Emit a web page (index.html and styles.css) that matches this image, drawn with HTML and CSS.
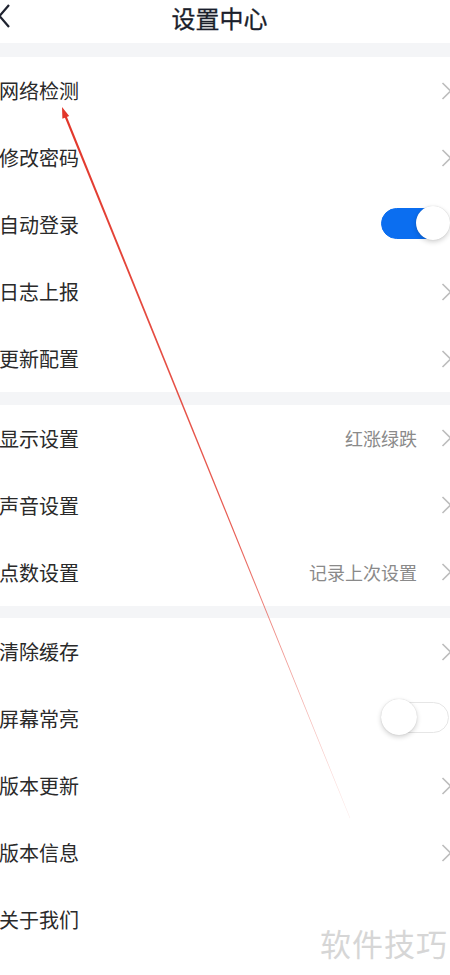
FILE: index.html
```html
<!DOCTYPE html>
<html lang="zh-CN">

<head>
  <meta charset="UTF-8" />
  <meta name="viewport" content="width=device-width, initial-scale=1.0" />
  <title>设置中心</title>
  <link rel="stylesheet" href="styles.css">
</head>

<body>
  <div id="page">
    <header class="topbar">
      <svg class="back" width="12" height="26" viewBox="0 0 12 26">
        <path d="M10 3 L0.5 14 L10 25" fill="none" stroke="#1f2330" stroke-width="2.2" stroke-linejoin="miter" />
      </svg>
      <h1 class="title">设置中心</h1>
    </header>

    <div class="gap"></div>
    <ul class="group">
      <li class="row"><span class="label">网络检测</span><span class="right"><svg class="arrow" viewBox="0 0 10 18"><path d="M1.5 1 L9.5 9 L1.5 17" /></svg></span></li>
      <li class="row"><span class="label">修改密码</span><span class="right"><svg class="arrow" viewBox="0 0 10 18"><path d="M1.5 1 L9.5 9 L1.5 17" /></svg></span></li>
      <li class="row"><span class="label">自动登录</span><span class="right"><span class="switch on"></span></span></li>
      <li class="row"><span class="label">日志上报</span><span class="right"><svg class="arrow" viewBox="0 0 10 18"><path d="M1.5 1 L9.5 9 L1.5 17" /></svg></span></li>
      <li class="row"><span class="label">更新配置</span><span class="right"><svg class="arrow" viewBox="0 0 10 18"><path d="M1.5 1 L9.5 9 L1.5 17" /></svg></span></li>
    </ul>

    <div class="gap small"></div>
    <ul class="group">
      <li class="row"><span class="label">显示设置</span><span class="right"><span class="value">红涨绿跌</span><svg class="arrow" viewBox="0 0 10 18"><path d="M1.5 1 L9.5 9 L1.5 17" /></svg></span></li>
      <li class="row"><span class="label">声音设置</span><span class="right"><svg class="arrow" viewBox="0 0 10 18"><path d="M1.5 1 L9.5 9 L1.5 17" /></svg></span></li>
      <li class="row"><span class="label">点数设置</span><span class="right"><span class="value">记录上次设置</span><svg class="arrow" viewBox="0 0 10 18"><path d="M1.5 1 L9.5 9 L1.5 17" /></svg></span></li>
    </ul>

    <div class="gap small"></div>
    <ul class="group">
      <li class="row"><span class="label">清除缓存</span><span class="right"><svg class="arrow" viewBox="0 0 10 18"><path d="M1.5 1 L9.5 9 L1.5 17" /></svg></span></li>
      <li class="row"><span class="label">屏幕常亮</span><span class="right"><span class="switch"></span></span></li>
      <li class="row"><span class="label">版本更新</span><span class="right"><svg class="arrow" viewBox="0 0 10 18"><path d="M1.5 1 L9.5 9 L1.5 17" /></svg></span></li>
      <li class="row"><span class="label">版本信息</span><span class="right"><svg class="arrow" viewBox="0 0 10 18"><path d="M1.5 1 L9.5 9 L1.5 17" /></svg></span></li>
      <li class="row"><span class="label">关于我们</span><span class="right"></span></li>
      <li class="row"><span class="label">用户协议</span><span class="right"><svg class="arrow" viewBox="0 0 10 18"><path d="M1.5 1 L9.5 9 L1.5 17" /></svg></span></li>
    </ul>

    <!-- annotation drawn on top of the screenshot -->
    <svg class="mark" width="450" height="975" viewBox="0 0 450 975">
      <defs>
        <linearGradient id="fade" x1="62" y1="108" x2="350" y2="820" gradientUnits="userSpaceOnUse">
          <stop offset="0" stop-color="#e2362a" stop-opacity="1" />
          <stop offset="0.6" stop-color="#e2362a" stop-opacity="0.8" />
          <stop offset="1" stop-color="#e2362a" stop-opacity="0.1" />
        </linearGradient>
      </defs>
      <polygon points="65.2,112.4 63.2,113.4 349.8,818.2 350.2,818" fill="url(#fade)" />
      <polygon points="62,107 69.2,116 62.4,118.8" fill="#e2362a" />
    </svg>

    <div class="watermark">软件技巧</div>
  </div>
</body>

</html>
```

FILE: styles.css
```css
body {
  margin: 0;
  padding: 0;
  background: #fff;
  font-family: "Noto Sans CJK SC", "Noto Sans", sans-serif;
  overflow: hidden;
}

#page {
  position: relative;
  width: 450px;
  height: 975px;
  overflow: hidden;
}

.topbar {
  height: 43px;
  display: flex;
  align-items: center;
  position: relative;
}

.back {
  margin-left: -1px;
  margin-top: -14px;
}

.title {
  flex: 1;
  margin: 0;
  padding-right: 22px;
  text-align: center;
  font-size: 24px;
  font-weight: 400;
  color: #1a1e2b;
  line-height: 43px;
  margin-top: -8px;
  -webkit-text-stroke: 0.3px #1a1e2b;
}

.gap {
  height: 14px;
  background: #f4f5f7;
}

.gap.small {
  height: 12.5px;
}

.group {
  list-style: none;
  margin: 0;
  padding: 0;
}

.row {
  height: 67px;
  display: flex;
  align-items: center;
  justify-content: space-between;
}

.label {
  font-size: 20px;
  color: #2a2a2a;
  margin-left: -1px;
}

.right {
  display: flex;
  align-items: center;
}

.value {
  font-size: 18px;
  color: #8a8a8a;
  margin-right: 24px;
}

.arrow {
  display: block;
  width: 10px;
  height: 18px;
  margin-right: -1px;
  fill: none;
  stroke: #bdbdbd;
  stroke-width: 1.6;
}

.switch {
  position: relative;
  display: block;
  width: 66px;
  height: 29px;
  border-radius: 16px;
  border: 1px solid #e6e6e6;
  background: #fff;
  margin-right: 1px;
  margin-top: -3px;
}

.switch::after {
  content: "";
  position: absolute;
  top: -4px;
  left: -1px;
  width: 36px;
  height: 36px;
  border-radius: 50%;
  background: #fff;
  box-shadow: 0 2px 5px rgba(0, 0, 0, 0.18), 0 0 1px rgba(0, 0, 0, 0.2);
}

.switch.on {
  background: #0b6ef0;
  border-color: #0b6ef0;
}

.switch.on::after {
  left: auto;
  right: -2px;
  top: -3px;
  width: 34px;
  height: 34px;
}

.mark {
  position: absolute;
  top: 0;
  left: 0;
  pointer-events: none;
}

.watermark {
  position: absolute;
  left: 320px;
  top: 920px;
  font-size: 31px;
  color: #d6d6d6;
  letter-spacing: 1px;
}
```
